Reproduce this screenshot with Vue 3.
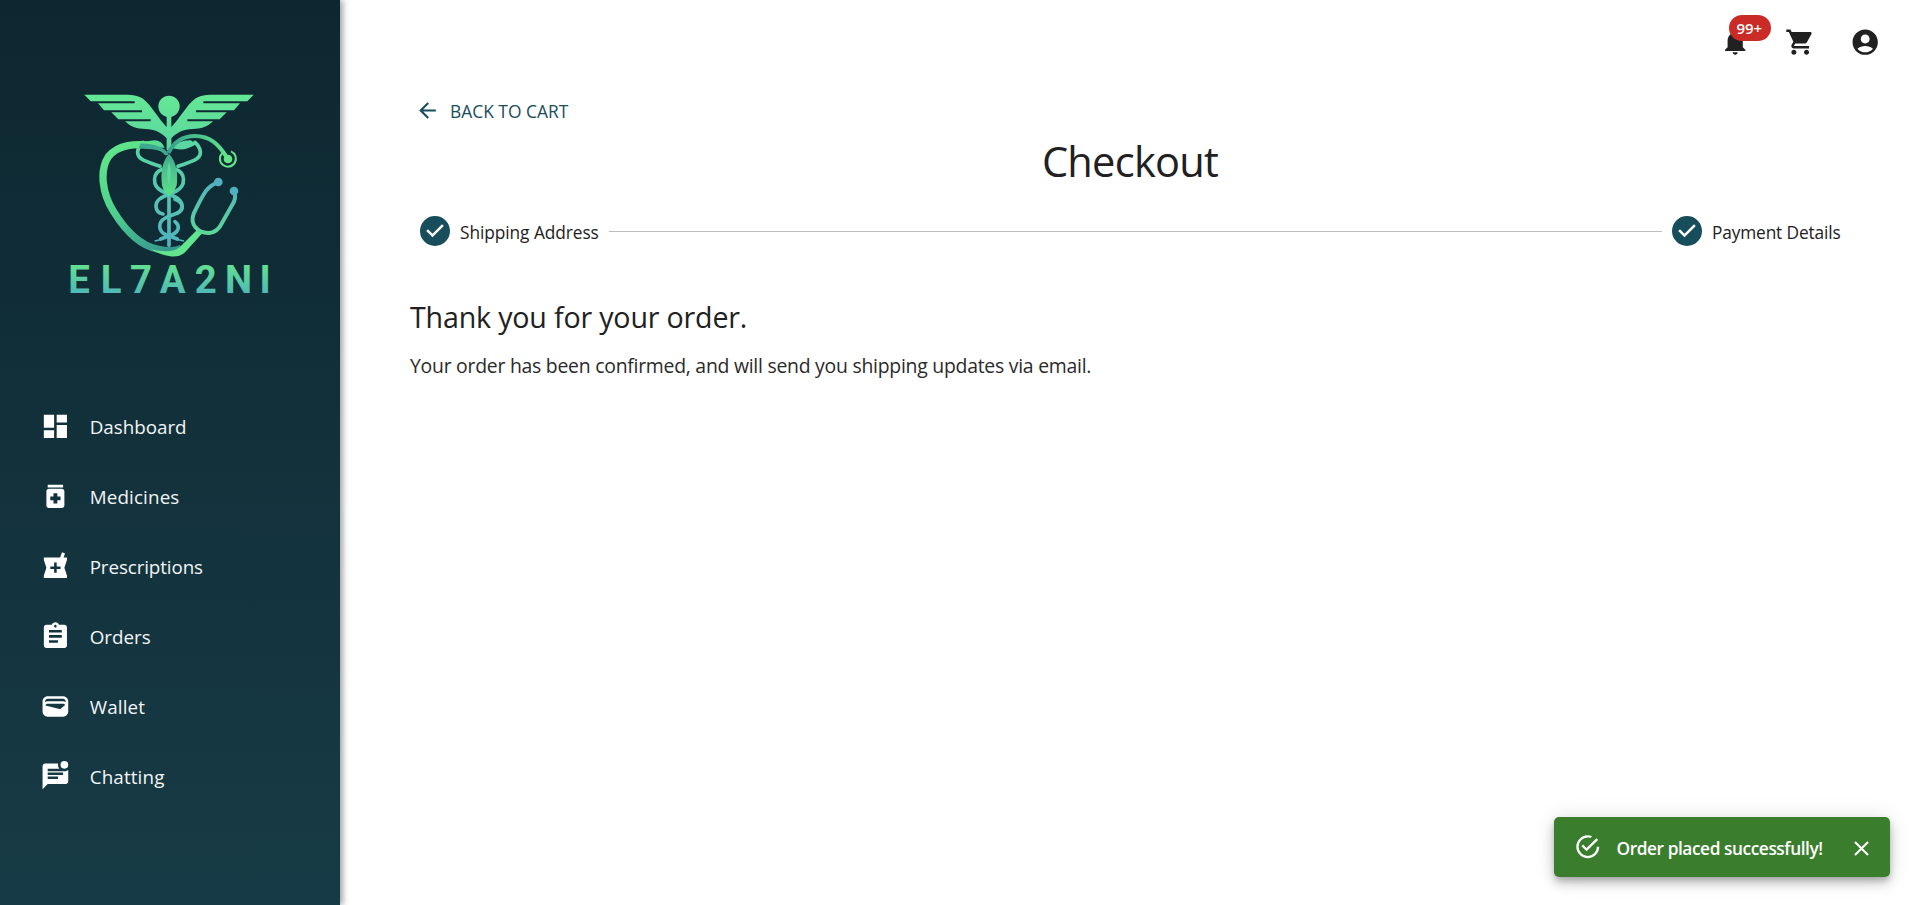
<script setup>
const navItems = [
  { label: 'Dashboard', cls: 'n1', path: 'M3 13h8V3H3v10zm0 8h8v-6H3v6zm10 0h8V11h-8v10zm0-18v6h8V3h-8z' },
  { label: 'Medicines', cls: 'n2', path: 'M6 3h12v2H6zm11 3H7c-1.1 0-2 .9-2 2v11c0 1.1.9 2 2 2h10c1.1 0 2-.9 2-2V8c0-1.1-.9-2-2-2zm-1 9h-2.5v2.5h-3V15H8v-3h2.5V9.5h3V12H16v3z' },
  { label: 'Prescriptions', cls: 'n3', path: 'M21 5h-2.64l1.14-3.14L17.15 1l-1.46 4H3v2l2 6-2 6v2h18v-2l-2-6 2-6V5zm-5 9h-3v3h-2v-3H8v-2h3V9h2v3h3v2z' },
  { label: 'Orders', cls: 'n4', path: 'M19 3h-4.18C14.4 1.84 13.3 1 12 1c-1.3 0-2.4.84-2.82 2H5c-1.1 0-2 .9-2 2v14c0 1.1.9 2 2 2h14c1.1 0 2-.9 2-2V5c0-1.1-.9-2-2-2zm-7 0c.55 0 1 .45 1 1s-.45 1-1 1-1-.45-1-1 .45-1 1-1zm2 14H7v-2h7v2zm3-4H7v-2h10v2zm0-4H7V7h10v2z' },
  { label: 'Wallet', cls: 'n5', path: 'M18 4H6C3.79 4 2 5.79 2 8v8c0 2.21 1.79 4 4 4h12c2.21 0 4-1.79 4-4V8c0-2.21-1.79-4-4-4zm-1.86 9.77c-.24.2-.57.28-.88.2L4.15 11.25C4.45 10.52 5.16 10 6 10h12c.67 0 1.26.34 1.63.84l-3.49 2.93zM6 6h12c1.1 0 2 .9 2 2v.55c-.59-.34-1.27-.55-2-.55H6c-.73 0-1.41.21-2 .55V8c0-1.1.9-2 2-2z' },
  { label: 'Chatting', cls: 'n6', path: 'M22 3a3 3 0 1 1-6 0 3 3 0 0 1 6 0zM6 8V6h9.03c-1.21-1.6-1.08-3.21-.92-4H4.01c-1.1 0-2 .9-2 2L2 22l4-4h14c1.1 0 2-.9 2-2V6.97C21.16 7.61 20.13 8 19 8H6zm8 6H6v-2h8v2zm4-3H6V9h12v2z' },
]
const letters = [
  { ch: 'E', x: 57 }, { ch: 'L', x: 153 }, { ch: '7', x: 243 }, { ch: 'A', x: 338 },
  { ch: '2', x: 437 }, { ch: 'N', x: 535.5 }, { ch: 'I', x: 615 },
]
const checkCircle = 'M12 0a12 12 0 1 0 0 24 12 12 0 0 0 0-24zm-2 17l-5-5 1.4-1.4 3.6 3.6 7.6-7.6L19 8l-9 9z'
</script>

<template>
  <div class="app">
    <aside class="sidebar">
      <svg class="logo" viewBox="0 0 660 720">
        <defs>
          <linearGradient id="wing" gradientUnits="userSpaceOnUse" x1="0" y1="40" x2="0" y2="270">
            <stop offset="0" stop-color="#64e894" /><stop offset="1" stop-color="#58cfa5" />
          </linearGradient>
          <linearGradient id="snake" gradientUnits="userSpaceOnUse" x1="0" y1="180" x2="0" y2="500">
            <stop offset="0" stop-color="#5bd8a0" /><stop offset="1" stop-color="#50b3bf" />
          </linearGradient>
          <linearGradient id="tubeL" gradientUnits="userSpaceOnUse" x1="150" y1="200" x2="330" y2="520">
            <stop offset="0" stop-color="#60e689" /><stop offset=".5" stop-color="#4fce8e" /><stop offset="1" stop-color="#35938f" />
          </linearGradient>
          <linearGradient id="tubeR" gradientUnits="userSpaceOnUse" x1="330" y1="0" x2="500" y2="0">
            <stop offset="0" stop-color="#38a18e" /><stop offset="1" stop-color="#5ee38a" />
          </linearGradient>
          <linearGradient id="fork" gradientUnits="userSpaceOnUse" x1="0" y1="300" x2="0" y2="520">
            <stop offset="0" stop-color="#50b0c0" /><stop offset="1" stop-color="#62e58c" />
          </linearGradient>
          <linearGradient id="leaf" gradientUnits="userSpaceOnUse" x1="0" y1="200" x2="0" y2="345">
            <stop offset="0" stop-color="#3aa48f" /><stop offset="1" stop-color="#5cdf88" />
          </linearGradient>
          <linearGradient id="word" gradientUnits="userSpaceOnUse" x1="0" y1="555" x2="0" y2="640">
            <stop offset="0" stop-color="#62e08f" /><stop offset="1" stop-color="#50b9b6" />
          </linearGradient>
        </defs>

        <g fill="url(#wing)">
          <circle cx="327" cy="79" r="32" />
          <path d="M320 100H334V141C360 114 380 75 405 56Q420 45 448 44H581L562 64H430V70H540L522 91H408V97H500L479 118H382V124H459C440 142 424 147 398 147C370 147 350 158 334 175V210H320V175C304 158 284 147 256 147C230 147 214 142 195 124H272V118H175L154 97H246V91H132L114 70H224V64H92L73 44H206Q234 45 249 56C274 75 294 114 320 141Z" />
        </g>

        <g fill="none" stroke="url(#snake)" stroke-width="11" stroke-linecap="round">
          <path d="M327 330V496" />
          <path d="M405 187C424 205 430 228 402 241C386 248 370 253 354 259" />
          <path d="M249 187C230 205 224 228 252 241C268 248 284 253 300 259" />
          <path d="M308 268C276 278 276 318 305 333C340 349 367 354 366 380C364 402 335 403 316 414C291 428 293 458 327 468L352 477" />
          <path d="M346 268C378 278 378 318 349 333C314 349 287 354 288 380C289 394 296 400 309 402" />
          <path d="M345 358C372 368 373 390 352 400" />
          <path d="M345 425C363 440 356 458 327 468L302 477" />
        </g>
        <path d="M249 193Q258 183 283 181Q306 182 314 203Q285 204 249 193ZM338 205Q355 180 392 181L409 192Q375 216 338 205Z" fill="#5ad6a2" />
        <path d="M284 483Q312 478 327 464Q342 478 372 483" fill="none" stroke="#51b7bd" stroke-width="5" />

        <path d="M300 198C220 188 174 194 145 230C119 270 125 338 161 395C195 450 241 497 292 507C324 514 350 513 365 505" fill="none" stroke="url(#tubeL)" stroke-width="22" />
        <path d="M242 190C285 193 316 201 327 225L315 226C304 207 275 208 236 205Z" fill="#3da990" />
        <path d="M327 222C307 243 301 279 306 316Q312 341 327 346Q342 341 350 316C355 279 348 243 327 222Z" fill="url(#leaf)" />
        <path d="M327 246Q316 280 327 319Q338 280 327 246Z" fill="#60d6a1" />
        <path d="M325 219C342 185 368 168 405 168C450 168 477 193 502 235" fill="none" stroke="url(#tubeR)" stroke-width="12" />
        <circle cx="504" cy="237" r="13" fill="#62e687" />
        <path d="M488 218A24 24 0 1 0 513 214" fill="none" stroke="#62e687" stroke-width="6" />

        <path d="M272 507C310 517 342 516 359 502L414 447L428 458L376 516Q360 533 330 529Q297 524 272 507Z" fill="#62e58c" />
        <path d="M475 307C443 317 433 334 401 401C389 432 412 460 447 459C469 458 479 444 487 427L521 367Q529 350 522 333" fill="none" stroke="url(#fork)" stroke-width="12" />
        <circle cx="475" cy="306" r="13" fill="#50afc0" /><circle cx="522" cy="333" r="13" fill="#50afc0" />

        <text class="wordmark" y="639" fill="url(#word)" text-anchor="middle">
          <tspan v-for="l in letters" :key="l.ch" :x="l.x">{{ l.ch }}</tspan>
        </text>
      </svg>
      <nav class="nav">
        <a v-for="n in navItems" :key="n.label" class="nav-item">
          <svg class="nav-icon" viewBox="0 0 24 24"><path :d="n.path" /></svg>
          <span :class="n.cls">{{ n.label }}</span>
        </a>
      </nav>
    </aside>

    <main class="main">
      <header class="topbar">
        <div class="bell">
          <svg class="top-icon" viewBox="0 0 24 24"><path d="M12 22c1.1 0 2-.9 2-2h-4c0 1.1.89 2 2 2zm6-6v-5c0-3.07-1.64-5.64-4.5-6.32V4c0-.83-.67-1.5-1.5-1.5s-1.5.67-1.5 1.5v.68C7.63 5.36 6 7.92 6 11v5l-2 2v1h16v-1l-2-2z" /></svg>
          <span class="badge">99+</span>
        </div>
        <svg class="top-icon" viewBox="0 0 24 24"><path d="M7 18c-1.1 0-1.99.9-1.99 2S5.9 22 7 22s2-.9 2-2-.9-2-2-2zM1 2v2h2l3.6 7.59-1.35 2.45c-.16.28-.25.61-.25.96 0 1.1.9 2 2 2h12v-2H7.42c-.14 0-.25-.11-.25-.25l.03-.12.9-1.63h7.45c.75 0 1.41-.41 1.75-1.03l3.58-6.49c.08-.14.12-.31.12-.48 0-.55-.45-1-1-1H5.21l-.94-2H1zm16 16c-1.1 0-1.99.9-1.99 2s.89 2 1.99 2 2-.9 2-2-.9-2-2-2z" /></svg>
        <svg class="top-icon" viewBox="0 0 24 24"><path d="M12 2C6.48 2 2 6.48 2 12s4.48 10 10 10 10-4.48 10-10S17.52 2 12 2zm0 4c1.93 0 3.5 1.57 3.5 3.5S13.93 13 12 13s-3.5-1.57-3.5-3.5S10.07 6 12 6zm0 14c-2.03 0-4.43-.82-6.14-2.88C7.55 15.8 9.68 15 12 15s4.45.8 6.14 2.12C16.43 19.18 14.03 20 12 20z" /></svg>
      </header>

      <a class="back">
        <svg viewBox="0 0 24 24"><path d="M20 11H7.83l5.59-5.59L12 4l-8 8 8 8 1.41-1.41L7.83 13H20v-2z" /></svg>
        <span>BACK TO CART</span>
      </a>
      <h1 class="title"><span>Checkout</span></h1>
      <div class="stepper">
        <svg viewBox="0 0 24 24"><path :d="checkCircle" /></svg>
        <span class="step s1">Shipping Address</span>
        <i class="line"></i>
        <svg viewBox="0 0 24 24"><path :d="checkCircle" /></svg>
        <span class="step s2">Payment Details</span>
      </div>
      <h2 class="thanks"><span>Thank you for your order.</span></h2>
      <p class="note"><span>Your order has been confirmed, and will send you shipping updates via email.</span></p>
    </main>

    <div class="toast">
      <svg class="ok" viewBox="0 0 24 24"><path d="M20,12A8,8 0 0,1 12,20A8,8 0 0,1 4,12A8,8 0 0,1 12,4C12.76,4 13.5,4.11 14.2,4.31L15.77,2.74C14.61,2.26 13.34,2 12,2A10,10 0 0,0 2,12A10,10 0 0,0 12,22A10,10 0 0,0 22,12M7.91,10.08L6.5,11.5L11,16L21,6L19.59,4.58L11,13.17L7.91,10.08Z" /></svg>
      <span class="msg">Order placed successfully!</span>
      <svg class="close" viewBox="0 0 24 24"><path d="M19 6.41L17.59 5 12 10.59 6.41 5 5 6.41 10.59 12 5 17.59 6.41 19 12 13.41 17.59 19 19 17.59 13.41 12z" /></svg>
    </div>
  </div>
</template>

<style>
body { margin: 0; background: #fff; overflow: hidden; }
</style>

<style scoped>
.app { display: flex; height: 905px; font-family: "Open Sans", "Noto Sans", sans-serif; color: #212121; position: relative; }
svg { display: block; fill: currentColor; flex: none; }
span { white-space: nowrap; }
.sidebar { width: 340px; flex: none; box-sizing: border-box; padding-top: 80px; background: linear-gradient(#0d2730, #173b46); box-shadow: 3px 0 6px rgba(0, 0, 0, .36); color: #fff; }
.logo { width: 220px; height: 240px; margin-left: 60px; overflow: visible; }
.wordmark { font: 700 115px Roboto, sans-serif; }
.nav { margin-top: 72px; display: flex; flex-direction: column; }
.nav-item { height: 70px; display: flex; align-items: center; padding-left: 39.7px; gap: 19.2px; font-size: 18.8px; color: #f3f5f6; }
.nav-icon { width: 30.8px; height: 30.8px; margin-top: -2px; color: #fff; }
.n2 { letter-spacing: .15px; }
.n3 { letter-spacing: -.1px; }
.n5, .n6 { letter-spacing: .15px; }
.main { flex: 1; display: flex; flex-direction: column; padding: 0 70px; }
.topbar { display: flex; align-items: center; justify-content: flex-end; gap: 34.6px; height: 84px; margin-right: -30.2px; }
.top-icon { width: 30.4px; height: 30.4px; }
.bell { position: relative; }
.badge { position: absolute; left: 9px; top: -12px; width: 42px; height: 26px; box-sizing: border-box; padding-right: 1px; border-radius: 13px; background: #cb2b27; color: #fff; font-size: 15px; font-weight: 600; line-height: 27px; text-align: center; }
.back { display: flex; align-items: center; height: 30px; margin-top: 12px; padding-left: 5px; gap: 10px; color: #184d5c; font-size: 17.4px; font-weight: 500; }
.back svg { width: 25px; height: 25px; margin-top: -1px; }
.title { margin: 5px 0 0; height: 60px; line-height: 60px; font-size: 41.6px; font-weight: 400; letter-spacing: -.75px; text-align: center; }
.stepper { margin-top: 25px; height: 30px; display: flex; align-items: center; padding: 0 10px; }
.stepper svg { width: 30px; height: 30px; color: #184d5c; margin-right: 10px; }
.step { font-size: 17.3px; font-weight: 500; line-height: 31px; padding-top: 2px; letter-spacing: -.06px; }
.s1 { width: 139px; }
.s2 { width: 128px; letter-spacing: -.14px; }
.line { flex: 1; height: 1px; background: #bdbdbd; margin: 0 10px; }
.thanks { margin: 51px 0 0; height: 40px; line-height: 40px; font-size: 28.6px; font-weight: 400; letter-spacing: -.17px; }
.note { margin: 14px 0 0; height: 30px; line-height: 30px; font-size: 19.4px; font-weight: 400; letter-spacing: -.25px; color: #2a2a2a; }
.toast { position: absolute; left: 1554px; top: 817px; width: 336px; height: 60px; box-sizing: border-box; border-radius: 5px; background: #3a7d2c; color: #fff; display: flex; align-items: center; padding: 0 16px 0 20px; box-shadow: 0 4px 6px -1px rgba(0, 0, 0, .22), 0 7px 12px rgba(0, 0, 0, .14), 0 1px 22px rgba(0, 0, 0, .12); }
.ok { width: 27.5px; height: 27.5px; margin-top: -1px; }
.msg { margin-left: 15px; padding-top: 2px; font-size: 17.3px; font-weight: 600; letter-spacing: -.43px; }
.close { width: 25px; height: 25px; margin-left: auto; margin-top: 3px; }
</style>
